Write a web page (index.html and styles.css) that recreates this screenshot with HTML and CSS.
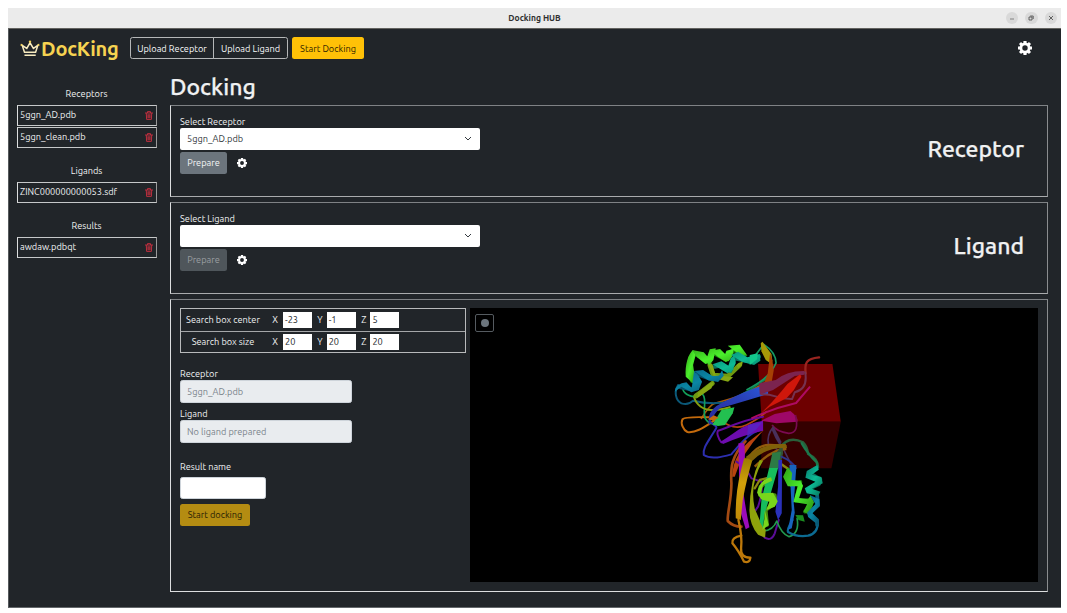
FILE: index.html
```html
<!DOCTYPE html>
<html lang="en">
<head>
<meta charset="utf-8">
<title>Docking HUB</title>
<link rel="stylesheet" href="styles.css">
</head>
<body>
<svg class="defs" aria-hidden="true">
  <symbol id="gear" viewBox="0 0 16 16">
    <g stroke="currentColor" fill="none">
      <circle cx="8" cy="8" r="4.7" stroke-width="3.2"/>
      <path stroke-width="3.6" d="M8 0v3M8 13v3M0 8h3M13 8h3"/>
      <path stroke-width="3.4" d="M2.3 2.3l2.2 2.2M11.5 11.5l2.2 2.2M13.7 2.3l-2.2 2.2M4.5 11.5l-2.2 2.2"/>
    </g>
  </symbol>
  <symbol id="trash" viewBox="0 0 16 18">
    <path fill="none" stroke="currentColor" stroke-width="1.9" d="M0 4h16M5 4V1.2h6V4M2.6 4l.6 12.8h9.6L13.4 4M6 6.5v8M8 6.5v8M10 6.5v8"/>
  </symbol>
</svg>
<div class="window">
  <header class="titlebar">
    <span class="title">Docking HUB</span>
    <div class="controls">
      <span class="control"><svg viewBox="0 0 12 12"><path d="M4 7h4"/></svg></span>
      <span class="control dark"><svg viewBox="0 0 12 12"><path d="M4 5h3v3h-3zM5.2 4h3v3"/></svg></span>
      <span class="control dark"><svg viewBox="0 0 12 12"><path d="M4 4l4 4M8 4l-4 4"/></svg></span>
    </div>
  </header>
  <nav class="navbar">
    <div class="brand">
      <svg class="crown" viewBox="0 0 20 17"><path d="M4.5 12.2 2.2 5.4l4.6 3L10 2.8l3.4 5.6 4.4-3-2.2 6.8zM4.5 15.2h11.2"/><circle cx="1.5" cy="5" r="1.1"/><circle cx="10" cy="1.8" r="1.2"/><circle cx="18.5" cy="5" r="1.1"/></svg>
      <span class="brand-name">DocKing</span>
    </div>
    <div class="btn-group"><button class="btn outline receptor">Upload Receptor</button><button class="btn outline ligand">Upload Ligand</button></div>
    <button class="btn warning">Start Docking</button>
    <svg class="nav-gear"><use href="#gear"/></svg>
  </nav>
  <div class="body">
    <aside class="sidebar">
      <section class="files">
        <h2>Receptors</h2>
        <div class="file"><span>5ggn_AD.pdb</span><svg class="trash"><use href="#trash"/></svg></div>
        <div class="file"><span>5ggn_clean.pdb</span><svg class="trash"><use href="#trash"/></svg></div>
      </section>
      <section class="files">
        <h2>Ligands</h2>
        <div class="file"><span>ZINC000000000053.sdf</span><svg class="trash"><use href="#trash"/></svg></div>
      </section>
      <section class="files">
        <h2>Results</h2>
        <div class="file"><span>awdaw.pdbqt</span><svg class="trash"><use href="#trash"/></svg></div>
      </section>
    </aside>
    <main class="main">
      <h1>Docking</h1>
      <section class="panel prep">
        <div class="prep-form">
          <div class="label">Select Receptor</div>
          <div class="select"><span>5ggn_AD.pdb</span><svg class="chevron" viewBox="0 0 8 6"><path d="M1 1l3 3 3-3"/></svg></div>
          <div class="actions"><button class="btn secondary">Prepare</button><svg class="small-gear"><use href="#gear"/></svg></div>
        </div>
        <h3 class="kind">Receptor</h3>
      </section>
      <section class="panel prep">
        <div class="prep-form">
          <div class="label">Select Ligand</div>
          <div class="select"><span></span><svg class="chevron" viewBox="0 0 8 6"><path d="M1 1l3 3 3-3"/></svg></div>
          <div class="actions"><button class="btn secondary disabled">Prepare</button><svg class="small-gear"><use href="#gear"/></svg></div>
        </div>
        <h3 class="kind">Ligand</h3>
      </section>
      <section class="panel dock">
        <div class="dock-form">
          <div class="box-table">
            <div class="box-row"><span class="box-name">Search box center</span><span class="axis first">X</span><span class="num">-23</span><span class="axis">Y</span><span class="num">-1</span><span class="axis">Z</span><span class="num">5</span></div>
            <div class="box-row"><span class="box-name">Search box size</span><span class="axis first">X</span><span class="num">20</span><span class="axis">Y</span><span class="num">20</span><span class="axis">Z</span><span class="num">20</span></div>
          </div>
          <div class="label">Receptor</div>
          <div class="input">5ggn_AD.pdb</div>
          <div class="label second">Ligand</div>
          <div class="input">No ligand prepared</div>
          <div class="label result">Result name</div>
          <div class="input name"></div>
          <button class="btn start">Start docking</button>
        </div>
        <div class="viewer">
          <svg class="scene" viewBox="470.5 308 567.5 274">
            <defs>
              <linearGradient id="gold" x1="0" y1="0" x2="0" y2="1"><stop offset="0" stop-color="#9a7a00"/><stop offset=".4" stop-color="#d0a00a"/><stop offset="1" stop-color="#c08a08"/></linearGradient>
              <linearGradient id="lime" x1="0" y1="0" x2="1" y2="1"><stop offset="0" stop-color="#2f9f16"/><stop offset=".5" stop-color="#4bf02c"/><stop offset="1" stop-color="#2a8c14"/></linearGradient>
              <linearGradient id="teal" x1="0" y1="0" x2="1" y2="1"><stop offset="0" stop-color="#067a70"/><stop offset=".5" stop-color="#0dbb94"/><stop offset="1" stop-color="#067058"/></linearGradient>
              <linearGradient id="sea" x1="0" y1="0" x2="1" y2="1"><stop offset="0" stop-color="#0a5a80"/><stop offset=".5" stop-color="#0a86a4"/><stop offset="1" stop-color="#064a66"/></linearGradient>
              <linearGradient id="royal" x1="0" y1="1" x2="1" y2="0"><stop offset="0" stop-color="#2a2a9a"/><stop offset=".6" stop-color="#2940b8"/><stop offset="1" stop-color="#2a5be0"/></linearGradient>
            </defs>
            <!-- search box faces -->
            <g transform="translate(750 330) scale(.33333)">
              <path fill="#6e0000" d="M25 102H248L273 275H36z"/>
              <path fill="#350000" d="M36 275H273L245 415H34z"/>
            </g>
            <!-- upper left domain -->
            <g transform="translate(660 330) scale(.33333)">
              <g fill="none" stroke-linecap="round" stroke-linejoin="round">
                <path stroke="#a85a0b" stroke-width="5" d="M125 265Q150 225 165 220Q220 205 255 192L330 150"/>
                <path stroke="#c46a0c" stroke-width="6" d="M160 262C130 262 75 258 68 268C62 280 70 300 83 306C110 310 135 290 172 266"/>
                <path stroke="#b5440f" stroke-width="5" d="M180 268C200 285 230 300 260 285C280 275 300 265 320 245"/>
                <path stroke="#0b5878" stroke-width="6" d="M55 165C42 185 48 212 65 220C80 225 90 222 100 212C140 222 200 224 240 205L310 175"/>
                <path stroke="#12a05b" stroke-width="5" d="M70 165C65 185 80 197 102 200Q112 185 128 192C145 210 125 245 138 268Q150 285 165 280"/>
                <path stroke="#84a011" stroke-width="6" d="M103 202C110 225 130 240 155 240Q175 242 210 232"/>
                <path stroke="#2d2fb0" stroke-width="6" d="M150 275C175 295 175 285 160 310C145 335 128 355 132 375C155 390 190 380 215 373C235 350 265 310 300 300"/>
                <path stroke="#65099c" stroke-width="6" d="M185 337C175 325 170 308 175 302C200 295 245 270 310 260"/>
                <path stroke="#118451" stroke-width="5" d="M225 205Q275 180 320 145"/>
                <path stroke="#6f9a10" stroke-width="14" d="M108 198L130 182 158 160M150 105L160 135 205 138 240 105"/>
                <path stroke="#1d7d10" stroke-width="14" d="M98 152L88 130 92 85 105 70 145 92 160 68 200 88 222 58 252 74"/>
                <path stroke="#08705f" stroke-width="12" d="M165 110L190 105 212 122 225 85 270 95 298 80"/>
                <path stroke="#07506a" stroke-width="12" d="M62 172L95 178 112 168 112 132 150 146 180 142"/>
              </g>
              <path fill="#86a713" d="M145 102L158 103 168 135 220 142 205 155 165 145zM115 188L150 160 162 157 155 175 112 205zM230 105L250 92 247 105 235 115z"/>
              <path fill="url(#lime)" d="M78 140C75 105 85 72 100 60L108 75 100 105 106 145 100 160z"/>
              <path fill="url(#lime)" d="M97 60L132 67 158 97 137 102 112 82zM138 92L150 58 168 55 161 90 148 106zM153 62L181 57 212 88 198 96 174 80zM190 88L200 62 222 56 218 78 207 94zM204 47L240 44 263 77 241 75 218 58z"/>
              <path fill="url(#teal)" d="M158 103L185 94 223 118 203 130 178 115zM200 125L213 85 223 75 228 100 214 128zM214 75L235 65 263 82 300 72 302 92 283 105 248 96z"/>
              <path fill="url(#sea)" d="M45 185Q48 160 80 157L96 174 103 123 115 135 127 155 117 180 95 187 65 170zM103 123L130 120 158 138 178 137 187 120 192 137 175 156 145 151z"/>
              <path fill="url(#royal)" d="M170 228C210 205 260 180 325 162V192Q240 218 180 235Q155 260 148 287Q140 250 170 228z"/>
              <path fill="#23c050" d="M158 284L185 240 224 232 219 250 196 285 175 288z"/>
              <path fill="#c26b0e" d="M145 268L162 256 177 263 160 272z"/>
              <path fill="#6d0cae" d="M182 335Q200 325 235 300Q265 280 310 272V302Q250 315 190 342z"/>
              <path fill="#b8430f" d="M217 440Q220 370 280 325L312 300Q245 370 225 440z"/>
              <path fill="#9a0cba" d="M238 345L254 335 256 400 238 400z"/>
            </g>
            <!-- strands crossing the box -->
            <g transform="translate(750 330) scale(.33333)">
              <path fill="none" stroke="#159a64" stroke-width="5" d="M10 85L42 43Q78 66 79 99C60 140 30 158-10 180"/>
              <path fill="#13c88c" d="M0 75L24 70 22 88 0 105z"/>
              <path fill="#a79908" d="M33 40L38 35 47 47 65 72 68 94 60 98 48 90 35 64z"/>
              <path fill="#a64005" d="M61 70L68 91 72 121 66 155 43 160 54 130z"/>
              <path fill="none" stroke="#992520" stroke-width="7" stroke-linecap="round" d="M168 130C164 100 168 86 208 82"/>
              <path fill="#7b244f" d="M28 160L78 150Q112 122 164 123V134L135 138 70 180 30 194z"/>
              <path fill="none" stroke="#763250" stroke-width="6" d="M33 193C80 192 80 208 127 207L135 187Q176 177 166 125"/>
              <path fill="#cf170b" d="M33 250Q65 220 94 185L113 162 151 133 155 140 132 181 110 205 60 230z"/>
              <path fill="none" stroke="#ae0b62" stroke-width="6" d="M5 265Q70 235 139 219L181 170"/>
              <path fill="#9e0867" d="M35 272L75 252 122 243Q146 262 143 275L80 280z"/>
              <path fill="none" stroke="#7a0a52" stroke-width="5" d="M137 255Q150 310 117 310Q80 305 67 285"/>
              <path fill="#49305b" d="M71 288L95 335 92 350Q75 325 66 300z"/>
              <path fill="none" stroke="#49305b" stroke-width="5" d="M71 290Q50 315 56 345Q80 350 90 370M95 345L130 415"/>
              <path fill="#5a20c0" d="M-5 285L38 276 18 300-8 318z"/>
              <path fill="none" stroke="#29603a" stroke-width="7" d="M90 355Q115 315 160 337Q173 350 175 372Q205 385 205 412"/>
              <path fill="none" stroke="#925b0d" stroke-width="7" d="M0 380Q20 345 60 345T110 350M15 410Q70 355 110 357"/>
              <path fill="#335236" d="M67 415L78 370 98 345 100 370 90 415z"/>
            </g>
            <!-- lower domain -->
            <g transform="translate(710 440) scale(.33333)">
              <g fill="none" stroke-linecap="round" stroke-linejoin="round">
                <path stroke="#a44a12" stroke-width="8" d="M107 4C65 50 62 80 65 130C65 180 52 220 54 243Q70 260 95 260"/>
                <path stroke="#bd780a" stroke-width="7" d="M86 240Q98 290 94 325Q92 353 122 353Q120 370 103 365Q85 330 68 310Q65 292 95 287"/>
                <path stroke="#5b0d98" stroke-width="6" d="M80 65Q108 80 125 115L155 125Q160 155 145 200Q125 225 135 240Q150 275 165 293Q185 305 195 280L207 240"/>
                <path stroke="#22994e" stroke-width="5" d="M163 273Q190 270 201 243Q215 282 238 290Q270 280 262 235"/>
                <path stroke="#0c6b92" stroke-width="7" d="M248 240Q230 270 235 276Q260 292 295 287Q325 280 324 245"/>
                <path stroke="#1c784c" stroke-width="7" d="M276 10Q293 40 321 67L323 80"/>
                <path stroke="#8a8612" stroke-width="7" d="M135 145L150 120 180 112M187 78L215 73 240 90"/>
                <path stroke="#2c3490" stroke-width="6" d="M215 50Q250 65 258 85"/>
                <path stroke="#0a6d5c" stroke-width="11" d="M322 82L298 98 332 118 328 132 295 148 322 160"/>
                <path stroke="#0a5f7c" stroke-width="11" d="M322 165L325 195 298 218 322 240 322 255"/>
                <path stroke="#1d7d10" stroke-width="11" d="M236 90L228 112 245 136 272 126 258 182 300 180 303 198 286 215"/>
                <path stroke="#4c8f10" stroke-width="11" d="M184 118L152 140 150 165 195 165 198 188 168 210 172 255"/>
              </g>
              <path fill="#9a0cba" d="M86 10L103 10 100 150Q108 210 119 262L108 268Q97 230 90 210z"/>
              <path fill="url(#gold)" d="M103 55L130 53Q112 110 99 180L93 240 78 235Q76 160 94 90z"/>
              <path fill="#806109" d="M107 52Q160 8 228 12L232 24Q170 20 128 62z"/>
              <path fill="#8fa20b" d="M150 60L160 62Q118 130 135 206L154 250 168 269 166 293 145 284Q120 255 119 212Q121 120 150 60z"/>
              <path fill="#2c7a45" d="M188 38L214 35 206 84H178z"/>
              <path fill="#16bd5d" d="M178 84H205L180 170 164 224 160 264 150 245 155 180z"/>
              <path fill="#2a31ba" d="M206 60L217 60 216 220 205 240 197 215 205 140z"/>
              <path fill="#1764bd" d="M239 75L260 75 252 190 255 218 246 265 235 269 246 210z"/>
              <path fill="#78d61c" d="M142 158Q150 118 184 112L187 122 160 135 153 160 190 158 204 184 195 200 170 210 179 185 154 178zM165 210L177 255 158 270 164 237z"/>
              <path fill="url(#lime)" d="M220 110L234 82 247 99 245 120 272 122 280 137 268 174 295 178 303 166 313 187 296 224 281 214 292 193 251 186 264 139 234 139z"/>
              <path fill="#1b8d20" d="M257 225L280 226 285 245 266 240z"/>
              <path fill="url(#teal)" d="M291 93L323 75 327 89 306 104 335 111 339 130 306 146 332 155 325 167 291 160 285 145 317 125 287 113z"/>
              <path fill="url(#sea)" d="M300 165L329 178 330 199 308 220 327 240 325 255 295 231 292 218 317 192z"/>
            </g>
          </svg>
          <span class="record"><i></i></span>
        </div>
      </section>
    </main>
  </div>
</div>
</body>
</html>
```
FILE: styles.css
```css
* { box-sizing: border-box; }
body { margin: 0; background: #fff; color: #f0f1f2; font: 9.2px/12px Ubuntu, "Noto Sans", sans-serif; }
h1, h2, h3 { margin: 0; font-weight: 500; }
.defs { display: none; }
.window { width: 1053px; height: 600px; margin: 8px 0 0 8px; background: #212529; display: flex; flex-direction: column; border-bottom: 1px solid #63676a; border-left: 1px solid #55595c; }
.titlebar { flex: none; height: 21px; margin-left: -1px; background: #ebebeb; border-bottom: 1px solid #62625f; display: grid; grid-template-columns: 1fr auto 1fr; align-items: center; color: #303030; }
.title { grid-column: 2; font-weight: 700; font-size: 8.5px; }
.controls { display: flex; justify-content: flex-end; gap: 7px; padding-right: 4px; }
.control { width: 12.5px; height: 12.5px; border-radius: 50%; background: #d9d9d9; }
.control svg { display: block; width: 12px; height: 12px; fill: none; stroke: #777; stroke-width: .9; }
.control.dark svg { stroke: #444; stroke-width: .8; }

.navbar { flex: none; height: 40px; display: flex; align-items: center; padding: 0 29px 2px 11px; }
.brand { display: flex; align-items: center; width: 110px; }
.crown { width: 20px; height: 17px; margin-right: 1px; fill: none; stroke: #f8ecc0; stroke-width: 1.5; }
.crown circle { fill: #f3d35b; stroke: none; }
.brand-name { color: #f6d351; font-size: 20px; font-weight: 600; line-height: 22px; letter-spacing: -.2px; padding-top: 1px; }
.btn { height: 22px; padding: 0; border: 1px solid transparent; border-radius: 2.5px; font: inherit; text-align: center; white-space: nowrap; }
.btn-group { display: flex; margin-right: 4px; }
.outline { background: none; color: #f8f9fa; border-color: #b5b7b8; }
.outline.receptor { width: 84px; border-radius: 2.5px 0 0 2.5px; }
.outline.ligand { width: 75px; margin-left: -1px; border-radius: 0 2.5px 2.5px 0; }
.warning { width: 72px; background: #ffc107; color: #332600; }
.navbar .btn { padding-top: 1px; }
.nav-gear { width: 14px; height: 14px; margin-left: auto; color: #fff; }

.body { flex: 1; display: flex; padding: 5px 13px 14px 8px; gap: 13px; }
.sidebar { width: 140px; padding-top: 14px; }
.files { margin-bottom: 17px; }
.files h2 { font-size: 9.2px; font-weight: 400; line-height: 12px; text-align: center; margin: 0 1px 5px 0; }
.file { height: 21px; margin-bottom: 1px; padding: 0 3px 1px 2px; border: 1px solid; border-color: #c6c8c9 #999 #c6c8c9 #dcdedf; display: flex; align-items: center; justify-content: space-between; }
.trash { width: 8px; height: 9px; color: #c32f3f; }

.main { flex: 1; display: flex; flex-direction: column; }
h1 { font-size: 23px; line-height: 26px; height: 31px; flex: none; }
h1, .kind { -webkit-text-stroke: .25px currentColor; }
.panel { flex: none; border: 1px solid; border-color: #7f8285 #8a8d8f #a9abad #dcdedf; padding: 9px; display: flex; }
.prep { height: 92px; margin-bottom: 5px; justify-content: space-between; }
.prep-form { width: 300px; }
.label { height: 13px; line-height: 14px; }
.select { height: 22px; border-radius: 2px; background: #fff; color: #343a40; display: flex; align-items: center; justify-content: space-between; padding: 0 8px 0 7px; }
.chevron { width: 8px; height: 6px; fill: none; stroke: #343a40; stroke-width: 1; }
.actions { display: flex; align-items: center; gap: 9.5px; margin-top: 2px; }
.secondary { width: 47px; background: #6c757d; color: #f4f5f6; }
.secondary.disabled { background: #4f565b; color: #9a9ea1; }
.small-gear { width: 10px; height: 10px; color: #fff; }
.kind { font-size: 23px; line-height: 30px; margin: 19px 14px 0 0; }

.dock { height: 293px; gap: 4px; padding-top: 8px; border-bottom-color: #dcdedf; }
.dock-form { width: 286px; }
.box-table { height: 45px; border: 1px solid #b8babb; margin-bottom: 14px; }
.box-row { height: 22px; display: flex; align-items: center; }
.box-row + .box-row { height: 21px; border-top: 1px solid #a5a7a9; }
.box-name { width: 84px; text-align: center; }
.axis { width: 14.7px; padding-right: 4px; text-align: right; }
.axis.first { width: 18px; padding-right: 5px; }
.num { width: 29px; height: 16px; background: #fff; color: #212529; padding-left: 2px; line-height: 16px; }
.input { width: 172px; height: 22.5px; border: 1px solid #ced4da; border-radius: 2.5px; background: #e9ecef; color: #7b848c; padding: 0 6px; line-height: 21px; }
.second { margin-top: 4.5px; }
.result { margin: 17px 0 4px; }
.input.name { width: 86px; background: #fff; }
.start { display: block; width: 70px; margin-top: 4.5px; background: #b48c12; color: #2a2204; }
.viewer { position: relative; flex: 1; height: 274px; background: #000; }
.scene { display: block; width: 100%; height: 100%; }
.record { position: absolute; left: 5px; top: 6px; width: 19px; height: 18px; border: 1px solid #555b60; border-radius: 2px; display: grid; place-items: center; }
.record i { width: 8px; height: 8px; border-radius: 50%; background: #6c757d; }
```
